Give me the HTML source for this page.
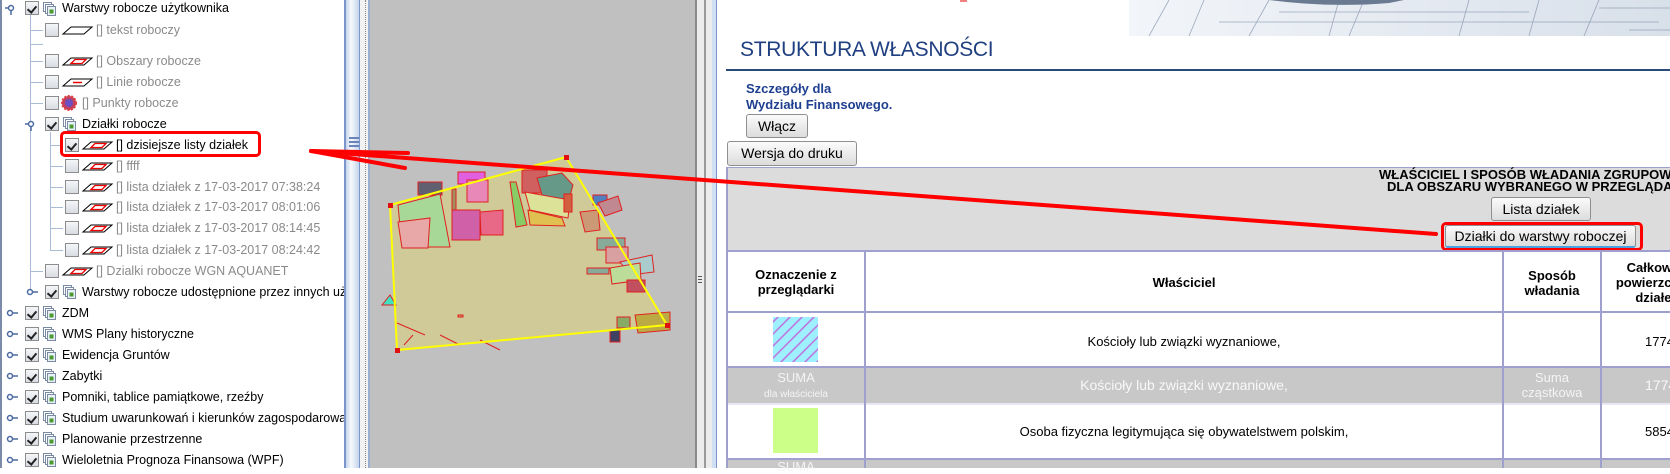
<!DOCTYPE html>
<html><head><meta charset="utf-8">
<style>
*{margin:0;padding:0;box-sizing:border-box}
body{width:1670px;height:468px;overflow:hidden;background:#fff;position:relative;font-family:"Liberation Sans",sans-serif}
.a{position:absolute;white-space:nowrap}
.t{position:absolute;font-size:12.5px;line-height:14px;white-space:nowrap}
.g{color:#8a8a8a}
.cb{position:absolute;width:14px;height:14px;border:1px solid #8c8c8c;background:linear-gradient(#f4f6f8,#d8dce2)}
.cb.k::after{content:"";position:absolute;left:3px;top:2px;width:4px;height:7px;border:solid #222;border-width:0 2px 2px 0;transform:rotate(40deg)}
.btn{position:absolute;border:1px solid #8f8f8f;border-radius:3px;background:linear-gradient(#fbfbfb,#dcdcdc);font-size:14px;color:#000;text-align:center;font-family:"Liberation Sans",sans-serif}
.hd{position:absolute;font-weight:bold;font-size:13px;text-align:center;line-height:15px;color:#000}
.vl{position:absolute;background:#a0a0d0;width:2px}
.hl{position:absolute;background:#a0a0d0;height:2px;left:726px;width:944px}
</style></head><body>

<!-- tree panel -->
<div class="a" style="left:0;top:0;width:2px;height:468px;background:#7a8aa8"></div>
<div class="a" style="left:30px;top:14px;width:1px;height:278px;background:#a8bcd8"></div>
<div class="a" style="left:50px;top:132px;width:1px;height:118px;background:#a8bcd8"></div>
<div class="a" style="left:30px;top:30px;width:13px;height:1px;background:#a8bcd8"></div>
<div class="a" style="left:30px;top:44px;width:13px;height:1px;background:#a8bcd8"></div>
<div class="a" style="left:30px;top:61px;width:13px;height:1px;background:#a8bcd8"></div>
<div class="a" style="left:30px;top:82px;width:13px;height:1px;background:#a8bcd8"></div>
<div class="a" style="left:30px;top:103px;width:13px;height:1px;background:#a8bcd8"></div>
<div class="a" style="left:30px;top:271px;width:13px;height:1px;background:#a8bcd8"></div>
<div class="a" style="left:50px;top:145px;width:13px;height:1px;background:#a8bcd8"></div>
<div class="a" style="left:50px;top:166px;width:13px;height:1px;background:#a8bcd8"></div>
<div class="a" style="left:50px;top:187px;width:13px;height:1px;background:#a8bcd8"></div>
<div class="a" style="left:50px;top:207px;width:13px;height:1px;background:#a8bcd8"></div>
<div class="a" style="left:50px;top:228px;width:13px;height:1px;background:#a8bcd8"></div>
<div class="a" style="left:50px;top:250px;width:13px;height:1px;background:#a8bcd8"></div>

<svg class="a" style="left:0;top:0" width="344" height="468">
<defs>
<g id="grp"><rect x="0.5" y="0.5" width="8" height="9" fill="#fff" stroke="#7a8aa0"/><rect x="2.5" y="2.5" width="8" height="9" fill="#fff" stroke="#7a8aa0"/><rect x="4.5" y="4.5" width="8" height="9" fill="#e8f0f8" stroke="#7a8aa0"/><rect x="6.5" y="7.5" width="4" height="4" fill="#4a9a30"/></g>
<g id="par"><polygon points="1,8 9,1 30,1 22,8" fill="#fff" stroke="#000" stroke-width="1"/></g>
<g id="parr"><polygon points="1,8 9,1 30,1 22,8" fill="#fff" stroke="#000"/><polygon points="9,6.5 13,2.5 24,2.5 20,6.5" fill="none" stroke="#e00" stroke-width="1.3"/></g>
<g id="exp"><circle cx="3" cy="3" r="2.5" fill="#fff" stroke="#4a6aa0" stroke-width="1.5"/><line x1="5.5" y1="3" x2="11" y2="3" stroke="#4a6aa0" stroke-width="1.5"/></g>
<g id="opn"><circle cx="3" cy="3" r="2.5" fill="#fff" stroke="#4a6aa0" stroke-width="1.5"/><line x1="3" y1="5.5" x2="3" y2="10" stroke="#4a6aa0" stroke-width="1.5"/><line x1="-3" y1="3" x2="0.5" y2="3" stroke="#4a6aa0" stroke-width="1.5"/></g>
</defs>
<use href="#opn" x="8" y="5"/>
<use href="#grp" x="43" y="2"/>
<use href="#par" x="62" y="26"/>
<use href="#parr" x="62" y="57"/>
<g transform="translate(62,78)"><polygon points="1,8 9,1 30,1 22,8" fill="#fff" stroke="#000"/><line x1="11" y1="4.5" x2="20" y2="4.5" stroke="#e00" stroke-width="1.5"/></g>
<circle cx="69" cy="103" r="7" fill="#c04060"/><circle cx="69" cy="103" r="4" fill="#6a50c0"/><circle cx="69" cy="103" r="7" fill="none" stroke="#e04040" stroke-dasharray="2 1.5" stroke-width="2"/>
<use href="#opn" x="28" y="121"/>
<use href="#grp" x="63" y="117"/>
<use href="#parr" x="82" y="141"/>
<use href="#parr" x="82" y="162"/>
<use href="#parr" x="82" y="183"/>
<use href="#parr" x="82" y="203"/>
<use href="#parr" x="82" y="224"/>
<use href="#parr" x="82" y="246"/>
<use href="#parr" x="62" y="267"/>
<use href="#exp" x="27" y="289"/><use href="#grp" x="63" y="285"/>
<use href="#exp" x="7" y="310"/><use href="#grp" x="43" y="306"/>
<use href="#exp" x="7" y="331"/><use href="#grp" x="43" y="327"/>
<use href="#exp" x="7" y="352"/><use href="#grp" x="43" y="348"/>
<use href="#exp" x="7" y="373"/><use href="#grp" x="43" y="369"/>
<use href="#exp" x="7" y="394"/><use href="#grp" x="43" y="390"/>
<use href="#exp" x="7" y="415"/><use href="#grp" x="43" y="411"/>
<use href="#exp" x="7" y="436"/><use href="#grp" x="43" y="432"/>
<use href="#exp" x="7" y="457"/><use href="#grp" x="43" y="453"/>
</svg>

<div class="cb k" style="left:25px;top:1px"></div><div class="t" style="left:62px;top:1px">Warstwy robocze użytkownika</div>
<div class="cb" style="left:45px;top:23px"></div><div class="t g" style="left:96px;top:23px">[] tekst roboczy</div>
<div class="cb" style="left:45px;top:54px"></div><div class="t g" style="left:96px;top:54px">[] Obszary robocze</div>
<div class="cb" style="left:45px;top:75px"></div><div class="t g" style="left:96px;top:75px">[] Linie robocze</div>
<div class="cb" style="left:45px;top:96px"></div><div class="t g" style="left:82px;top:96px">[] Punkty robocze</div>
<div class="cb k" style="left:45px;top:117px"></div><div class="t" style="left:82px;top:117px">Działki robocze</div>
<div class="cb k" style="left:65px;top:138px"></div><div class="t" style="left:116px;top:138px">[] dzisiejsze listy działek</div>
<div class="cb" style="left:65px;top:159px"></div><div class="t g" style="left:116px;top:159px">[] ffff</div>
<div class="cb" style="left:65px;top:180px"></div><div class="t g" style="left:116px;top:180px">[] lista działek z 17-03-2017 07:38:24</div>
<div class="cb" style="left:65px;top:200px"></div><div class="t g" style="left:116px;top:200px">[] lista działek z 17-03-2017 08:01:06</div>
<div class="cb" style="left:65px;top:221px"></div><div class="t g" style="left:116px;top:221px">[] lista działek z 17-03-2017 08:14:45</div>
<div class="cb" style="left:65px;top:243px"></div><div class="t g" style="left:116px;top:243px">[] lista działek z 17-03-2017 08:24:42</div>
<div class="cb" style="left:45px;top:264px"></div><div class="t g" style="left:96px;top:264px">[] Dzialki robocze WGN AQUANET</div>
<div class="cb k" style="left:45px;top:285px"></div><div class="t" style="left:82px;top:285px">Warstwy robocze udostępnione przez innych użytkowników</div>
<div class="cb k" style="left:25px;top:306px"></div><div class="t" style="left:62px;top:306px">ZDM</div>
<div class="cb k" style="left:25px;top:327px"></div><div class="t" style="left:62px;top:327px">WMS Plany historyczne</div>
<div class="cb k" style="left:25px;top:348px"></div><div class="t" style="left:62px;top:348px">Ewidencja Gruntów</div>
<div class="cb k" style="left:25px;top:369px"></div><div class="t" style="left:62px;top:369px">Zabytki</div>
<div class="cb k" style="left:25px;top:390px"></div><div class="t" style="left:62px;top:390px">Pomniki, tablice pamiątkowe, rzeźby</div>
<div class="cb k" style="left:25px;top:411px"></div><div class="t" style="left:62px;top:411px">Studium uwarunkowań i kierunków zagospodarowania przestrzennego</div>
<div class="cb k" style="left:25px;top:432px"></div><div class="t" style="left:62px;top:432px">Planowanie przestrzenne</div>
<div class="cb k" style="left:25px;top:453px"></div><div class="t" style="left:62px;top:453px">Wieloletnia Prognoza Finansowa (WPF)</div>

<div class="a" style="left:60px;top:131px;width:201px;height:26px;border:3px solid #f00;border-radius:5px"></div>

<!-- scroll strip + splitter -->
<div class="a" style="left:344px;top:0;width:16px;height:468px;background:linear-gradient(90deg,#c8d6ec,#f6f9fd 40%,#c4d4ea);border-left:2px solid #7a96cc;border-right:1px solid #7a96cc"></div>
<div class="a" style="left:349px;top:137px;width:10px;height:2px;background:#6a84b8"></div>
<div class="a" style="left:349px;top:141px;width:10px;height:2px;background:#6a84b8"></div>
<div class="a" style="left:349px;top:145px;width:10px;height:2px;background:#6a84b8"></div>
<div class="a" style="left:360px;top:0;width:10px;height:468px;background:#f2f2f2;border-right:2px solid #9aaed0"></div>
<div class="a" style="left:365px;top:0;width:0;height:468px;border-left:1px dotted #888"></div>

<!-- map -->
<svg class="a" style="left:370px;top:0" width="325" height="468" viewBox="370 0 325 468">
<rect x="370" y="0" width="325" height="468" fill="#c0c0c0"/>
<polygon points="390,205 566,157 667,325 397,350" fill="#cfca98"/>
<g stroke="#e02020" stroke-width="1">
<rect x="458" y="172" width="27" height="12" fill="#e060e0"/>
<rect x="467" y="180" width="21" height="22" fill="#e888b8"/>
<rect x="418" y="182" width="24" height="13" fill="#606070"/>
<rect x="452" y="189" width="4" height="30" fill="#a09060"/>
<polygon points="398,205 440,194 450,247 402,247" fill="#a8d898"/>
<polygon points="398,222 430,218 428,248 402,248" fill="#e8a8a8"/>
<rect x="452" y="210" width="28" height="30" fill="#d060a8"/>
<polygon points="480,212 503,210 503,235 481,235" fill="#e86888"/>
<polygon points="510,182 516,182 527,225 516,227" fill="#88cc66"/>
<rect x="522" y="170" width="25" height="23" fill="#d06060"/>
<polygon points="537,178 562,173 573,185 568,203 542,195" fill="#669988"/>
<polygon points="525,192 570,200 568,218 530,210" fill="#dde299"/>
<polygon points="528,210 562,218 565,226 530,225" fill="#e0c050"/>
<rect x="564" y="194" width="8" height="18" fill="#d06040"/>
<rect x="593" y="195" width="14" height="10" fill="#5080c0"/>
<polygon points="598,203 618,196 622,210 605,216" fill="#c08890"/>
<polygon points="580,212 598,210 600,230 585,232" fill="#cc9977"/>
<rect x="597" y="238" width="28" height="12" fill="#88aa99"/>
<rect x="606" y="247" width="22" height="16" fill="#d8a0a0"/>
<polygon points="620,262 652,255 654,272 630,275" fill="#aacccc"/>
<polygon points="610,268 640,263 641,280 612,284" fill="#bbdd99"/>
<rect x="627" y="280" width="18" height="12" fill="#c05060"/>
<rect x="587" y="268" width="22" height="6" fill="#88aa99"/>
<polygon points="635,315 670,312 670,330 638,333" fill="#bbaa44"/>
<rect x="617" y="317" width="13" height="11" fill="#88aa66"/>
<rect x="610" y="330" width="10" height="12" fill="#404060"/>
<polygon points="382,305 390,295 396,305" fill="#40e0c0"/>
<rect x="458" y="315" width="5" height="2" fill="#cc9966"/>
<line x1="397" y1="323" x2="425" y2="335" />
<line x1="413" y1="335" x2="404" y2="345" />
<line x1="440" y1="335" x2="460" y2="345" />
<line x1="480" y1="340" x2="500" y2="350" />
</g>
<polygon points="390,205 566,157 667,325 397,350" fill="none" stroke="#ffff00" stroke-width="2"/>
<g fill="#e01010"><rect x="388" y="203" width="5" height="5"/><rect x="564" y="155" width="5" height="5"/><rect x="665" y="323" width="5" height="5"/><rect x="395" y="348" width="5" height="5"/></g>
</svg>

<!-- splitter right -->
<div class="a" style="left:695px;top:0;width:22px;height:468px;background:#ececec;border-left:2px solid #8a8a8a;border-right:1px solid #7a96cc"></div>
<div class="a" style="left:704px;top:0;width:2px;height:468px;background:#9a9a9a"></div>
<div class="a" style="left:712px;top:0;width:4px;height:468px;background:#cfe0f4"></div>
<div class="a" style="left:698px;top:276px;width:4px;height:1px;background:#555;box-shadow:0 3px 0 #555,0 6px 0 #555"></div>

<!-- right content -->
<svg class="a" style="left:1129px;top:0" width="541" height="36">
<defs><linearGradient id="bg" x1="0" x2="1"><stop offset="0" stop-color="#f2f5f9"/><stop offset="1" stop-color="#d8e0ea"/></linearGradient></defs>
<rect width="541" height="36" fill="url(#bg)"/>
<g stroke="#7a8aa4" stroke-width="0.8" fill="none" opacity="0.7">
<path d="M20 36 L40 0 M60 36 L75 0 M120 36 L140 0 M200 36 L210 0 M150 12 H400 M90 22 H530 M220 36 L235 0 M330 36 L340 0 M400 36 L410 0 M455 36 L470 0 M500 30 H541 M470 8 H541"/>
</g>
<path d="M140 0 Q200 8 260 3 L275 0 Z" fill="#6a7a90"/>
</svg>
<div class="a" style="left:960px;top:0;width:7px;height:2px;background:#f08080"></div>

<div class="a" style="left:740px;top:38px;font-size:21px;color:#1f3f80;letter-spacing:-0.3px">STRUKTURA WŁASNOŚCI</div>
<div class="a" style="left:726px;top:69px;width:944px;height:2px;background:#2a4a7a"></div>
<div class="a" style="left:746px;top:81px;font-size:13px;font-weight:bold;color:#1f3f90;line-height:16px">Szczegóły dla<br>Wydziału Finansowego.</div>
<div class="btn" style="left:746px;top:114px;width:62px;height:24px;line-height:22px">Włącz</div>
<div class="btn" style="left:727px;top:141px;width:130px;height:25px;line-height:23px">Wersja do druku</div>

<div class="a" style="left:726px;top:167px;width:944px;height:84px;background:#dcdcdc;border-top:1px solid #a0a0d0;border-left:2px solid #a0a0d0"></div>
<div class="a" style="left:1379px;top:169px;font-size:13px;font-weight:bold;line-height:12px">WŁAŚCICIEL I SPOSÓB WŁADANIA ZGRUPOWANE</div>
<div class="a" style="left:1387px;top:181px;font-size:13px;font-weight:bold;line-height:12px">DLA OBSZARU WYBRANEGO W PRZEGLĄDARCE</div>
<div class="btn" style="left:1491px;top:197px;width:100px;height:24px;line-height:22px">Lista działek</div>
<div class="a" style="left:1441px;top:222px;width:202px;height:29px;border:3px solid #f00;border-radius:5px"></div>
<div class="btn" style="left:1445px;top:225px;width:191px;height:23px;line-height:21px;border-bottom:2px solid #4aa0e0">Działki do warstwy roboczej</div>

<!-- table -->
<div class="a" style="left:726px;top:251px;width:944px;height:217px;background:#fff"></div>
<div class="a" style="left:726px;top:367px;width:944px;height:37px;background:#c8c8c8"></div>
<div class="a" style="left:726px;top:459px;width:944px;height:9px;background:#c8c8c8"></div>
<div class="hl" style="top:250px"></div>
<div class="hl" style="top:311px"></div>
<div class="hl" style="top:366px"></div>
<div class="hl" style="top:403px;background:#e8e8f4"></div>
<div class="hl" style="top:458px"></div>
<div class="vl" style="left:726px;top:250px;height:218px"></div>
<div class="vl" style="left:864px;top:250px;height:218px"></div>
<div class="vl" style="left:1502px;top:250px;height:218px"></div>
<div class="vl" style="left:1600px;top:250px;height:218px"></div>

<div class="hd" style="left:728px;top:267px;width:136px">Oznaczenie z<br>przeglądarki</div>
<div class="hd" style="left:866px;top:275px;width:636px">Właściciel</div>
<div class="hd" style="left:1504px;top:268px;width:96px">Sposób<br>władania</div>
<div class="hd" style="left:1602px;top:260px;width:110px">Całkowita<br>powierzchnia<br>działek</div>

<svg class="a" style="left:773px;top:317px" width="45" height="45">
<rect width="45" height="45" fill="#9ff0ff"/>
<g stroke="#c070e0" stroke-width="1.5">
<path d="M-5 10 L10 -5 M-5 22 L22 -5 M-5 34 L34 -5 M-5 46 L46 -5 M-5 58 L58 -5 M5 60 L60 5 M17 60 L60 17 M29 60 L60 29 M41 60 L60 41"/>
</g>
</svg>
<div class="a" style="left:866px;top:334px;width:636px;text-align:center;font-size:13px">Kościoły lub związki wyznaniowe,</div>
<div class="a" style="left:1645px;top:334px;font-size:13px">1774</div>

<div class="a" style="left:728px;top:370px;width:136px;text-align:center;color:#f4f4f4;font-size:13px;line-height:15px">SUMA<br><span style="font-size:10px">dla właściciela</span></div>
<div class="a" style="left:866px;top:377px;width:636px;text-align:center;color:#f8f8f8;font-size:14px">Kościoły lub związki wyznaniowe,</div>
<div class="a" style="left:1504px;top:370px;width:96px;text-align:center;color:#f4f4f4;font-size:13px;line-height:15px">Suma<br>cząstkowa</div>
<div class="a" style="left:1645px;top:377px;color:#f8f8f8;font-size:14px">1774</div>

<div class="a" style="left:773px;top:408px;width:45px;height:45px;background:#ccff88"></div>
<div class="a" style="left:866px;top:424px;width:636px;text-align:center;font-size:13px">Osoba fizyczna legitymująca się obywatelstwem polskim,</div>
<div class="a" style="left:1645px;top:424px;font-size:13px">5854</div>
<div class="a" style="left:728px;top:459px;width:136px;text-align:center;color:#f4f4f4;font-size:13px">SUMA</div>

<!-- red arrow -->
<svg class="a" style="left:0;top:0" width="1670" height="468">
<g stroke="#f00" stroke-width="4" stroke-linecap="round" fill="none">
<line x1="311" y1="151" x2="1436" y2="234"/>
<line x1="311" y1="151" x2="408" y2="153"/>
<line x1="311" y1="151" x2="405" y2="168"/>
</g>
</svg>
</body></html>
